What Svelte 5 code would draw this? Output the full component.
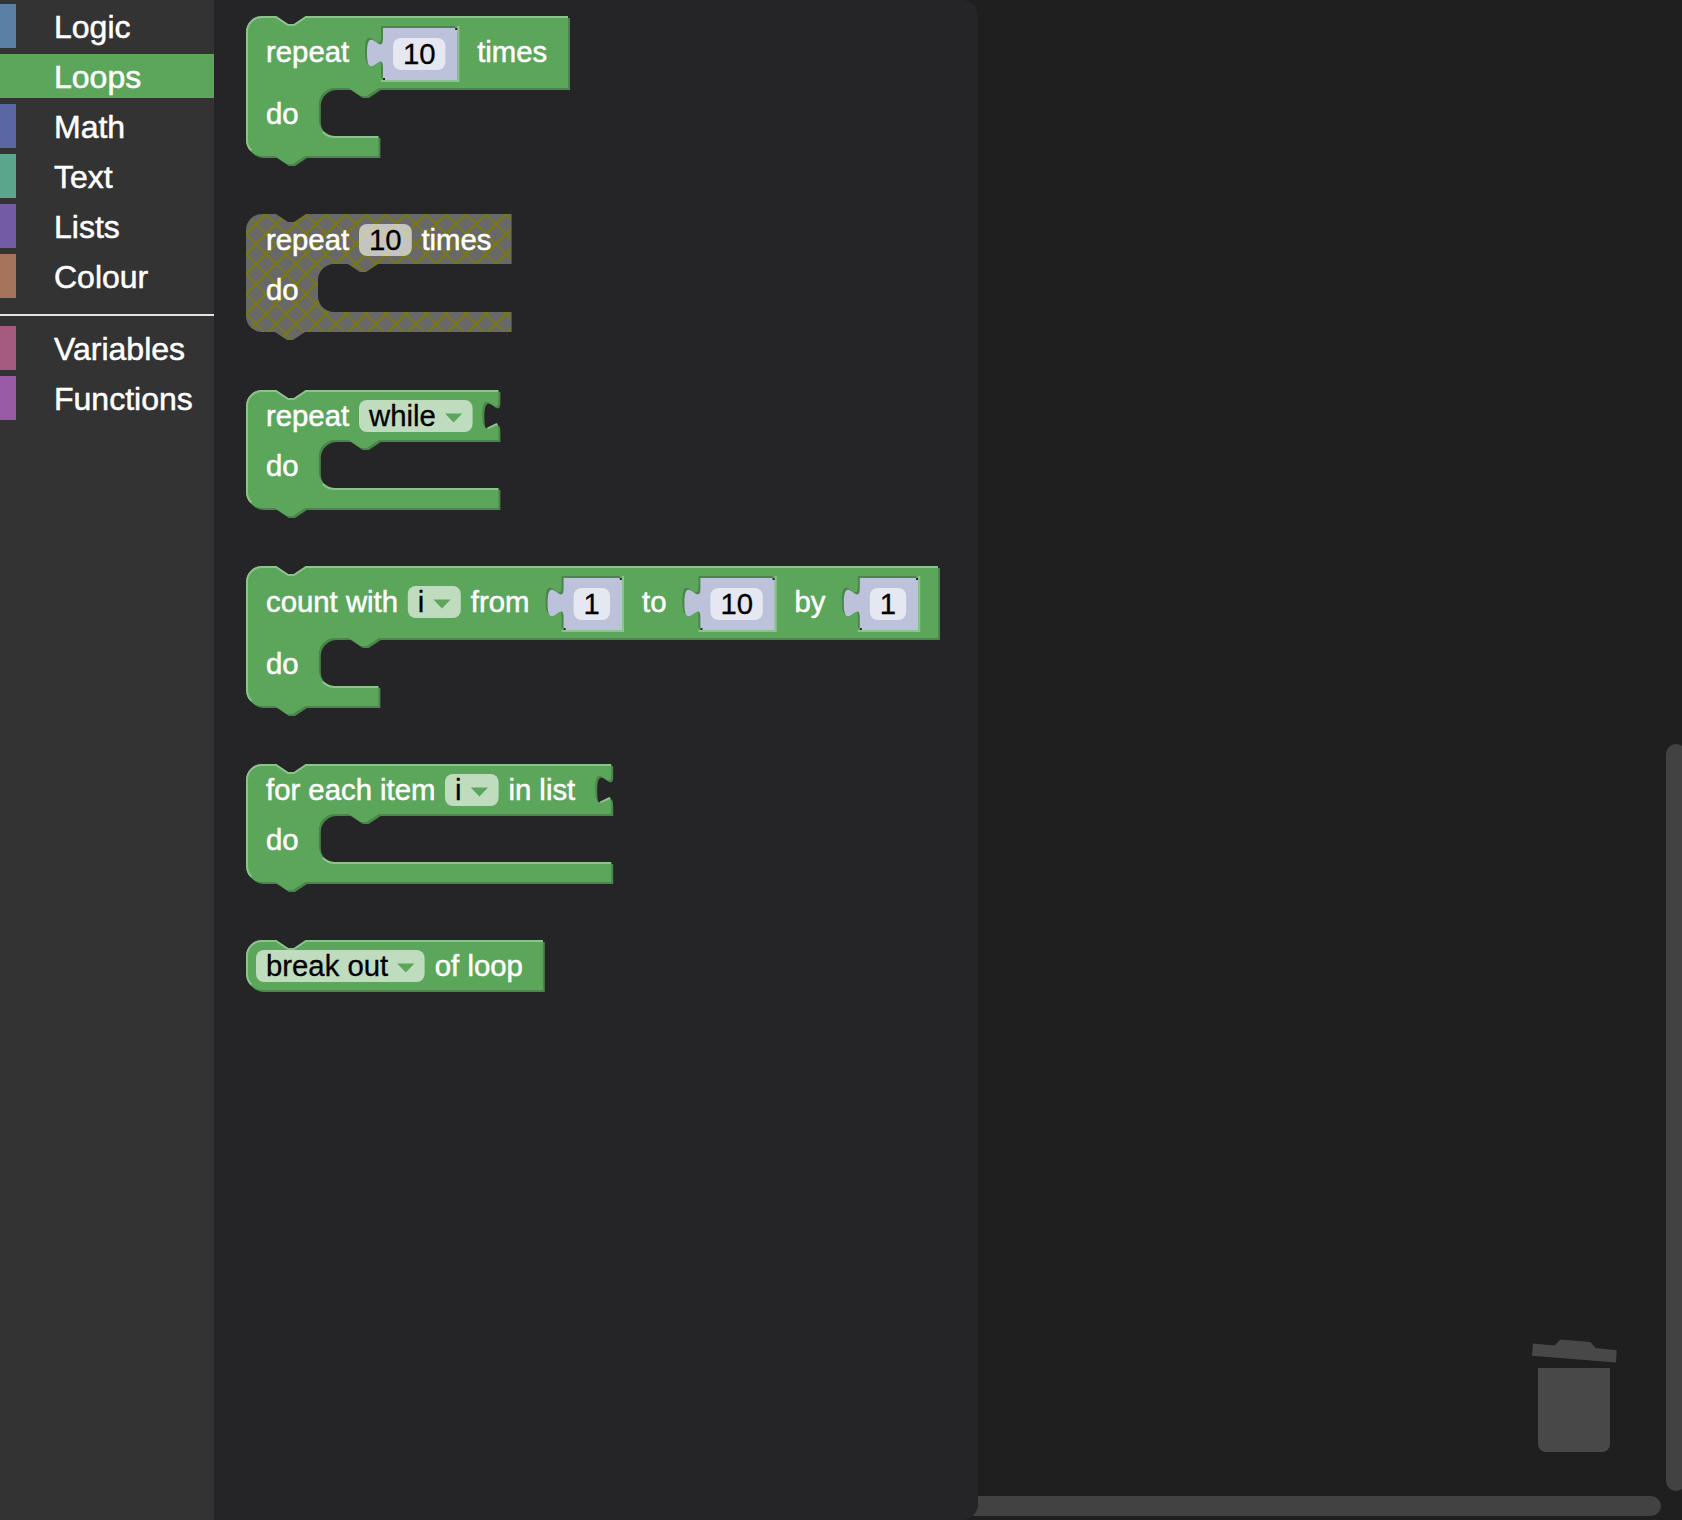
<script>
  const groups = [
    [
      { name: 'Logic', tone: 'logic' },
      { name: 'Loops', tone: 'loops', selected: true },
      { name: 'Math', tone: 'math' },
      { name: 'Text', tone: 'text' },
      { name: 'Lists', tone: 'lists' },
      { name: 'Colour', tone: 'colour' },
    ],
    [
      { name: 'Variables', tone: 'variables' },
      { name: 'Functions', tone: 'functions' },
    ],
  ];

  // Block geometry is in workspace units; each unit is drawn at two pixels.
  // w: width, row: height of the first row, foot: width of the statement foot
  const blocks = [
    {
      w: 161, row: 36, foot: 66.2, statement: true,
      labels: [{ x: 10, t: 'repeat' }, { x: 115.6, t: 'times' }],
      values: [{ x: 68.5, w: 37.2, t: '10' }],
    },
    {
      w: 132.8, row: 25, foot: 132.8, statement: true, disabled: true,
      labels: [{ x: 10, t: 'repeat' }, { x: 87.7, t: 'times' }],
      fields: [{ x: 56.5, w: 26.4, t: '10' }],
    },
    {
      w: 126.2, row: 25, foot: 126.2, statement: true, socket: true,
      labels: [{ x: 10, t: 'repeat' }],
      fields: [{ x: 56.5, w: 56.8, t: 'while', arrow: 99.5 }],
    },
    {
      w: 346, row: 36, foot: 66.2, statement: true,
      labels: [{ x: 10, t: 'count with' }, { x: 112.4, t: 'from' }, { x: 198, t: 'to' }, { x: 274.2, t: 'by' }],
      fields: [{ x: 80.9, w: 26.5, t: 'i', arrow: 93.7 }],
      values: [{ x: 158.8, w: 29.2, t: '1' }, { x: 227.2, w: 37.2, t: '10' }, { x: 306.9, w: 29.2, t: '1' }],
    },
    {
      w: 182.6, row: 25, foot: 182.6, statement: true, socket: true,
      labels: [{ x: 10, t: 'for each item' }, { x: 131.2, t: 'in list' }],
      fields: [{ x: 99.5, w: 26.8, t: 'i', arrow: 112.4 }],
    },
    {
      w: 148.4, row: 25,
      labels: [{ x: 94.4, t: 'of loop' }],
      fields: [{ x: 5, w: 84.3, t: 'break out', arrow: 75.6 }],
    },
  ];

  const total = (b) => (b.statement ? b.row + 34 : b.row);
  const inset = (b) => (b.disabled ? 0 : 0.4);

  function outline(b) {
    const h = total(b);
    let d = `M0,8 A8,8 0 0,1 8,0 H15 l6,4 3,0 6,-4 H${b.w}`;
    if (b.socket) d += ' V5 c0,10 -8,-8 -8,7.5 s8,-2.5 8,7.5';
    d += ` V${b.row}`;
    if (b.statement) {
      d += ` H${66 + inset(b)} l-6,4 -3,0 -6,-4 h-7 a8,8 0 0,0 -8,8 v8 a8,8 0 0,0 8,8 H${b.foot} V${h}`;
      d += ' H29.5 l-6,4 -3,0 -6,-4';
    }
    return d + ' H8 a8,8 0 0,1 -8,-8 z';
  }

  function highlight(b) {
    const h = total(b);
    let d = `M2.7,${h - 2.7} A7.5,7.5 0 0,1 0.5,${h - 8} V8 A7.5,7.5 0 0,1 8,0.5 H15 l6,4 3,0 6,-4 H${b.w}`;
    if (b.socket) d += ` M${b.w - 5.4},19.2 l4.9,-2.3`;
    if (b.statement) d += ` M38.4,${b.row + 22} A8.5,8.5 0 0,0 44.4,${b.row + 24.5} H${b.foot}`;
    return d;
  }

  const plug = (w) => `M0,0 H${w} V26 H0 V20 c0,-10 -8,8 -8,-7.5 s8,2.5 8,-7.5 z`;
</script>

<div class="workspace">
  <nav class="toolbox">
    {#each groups as group, g}
      {#if g > 0}<div class="separator"></div>{/if}
      {#each group as c}
        <div class="category {c.tone}" class:selected={c.selected}>{c.name}</div>
      {/each}
    {/each}
  </nav>

  <section class="flyout">
    {#each blocks as b}
      {@const base = b.row === 36 ? 23.1 : 18.1}
      {@const top = b.row === 36 ? 10 : 5}
      <svg class="block" width={(b.w + 2) * 2} height={(total(b) + 5) * 2} viewBox="0 0 {b.w + 2} {total(b) + 5}">
        {#if b.disabled}
          <defs>
            <pattern id="hatch" width="10" height="10" patternUnits="userSpaceOnUse">
              <rect width="10" height="10" fill="#aaa" />
              <path d="M0,0 L10,10 M10,0 L0,10" stroke="#cc0" />
            </pattern>
          </defs>
          <path d={outline(b)} fill="url(#hatch)" fill-opacity="0.5" />
        {:else}
          <path class="dark" d={outline(b)} transform="translate(1,1)" />
          <path class="body" d={outline(b)} />
          <path class="light" d={highlight(b)} />
        {/if}
        {#each b.fields ?? [] as f}
          <rect class="field" x={f.x} y={top} width={f.w} height="16" rx="4" />
          <text class="value" x={f.x + 5} y={base}>{f.t}</text>
          {#if f.arrow}
            <path class="body" d="M{f.arrow},{top + 6.8} h8.6 l-4.3,4.5 z" />
          {/if}
        {/each}
        {#each b.values ?? [] as v}
          <g transform="translate({v.x},6)">
            <path class="dark" d={plug(v.w)} transform="translate(-1,-1)" />
            <path class="shadow" d={plug(v.w)} />
            <path class="light" d="M-1,26.5 H{v.w + 0.5} V-1" />
            <rect class="pit" x={v.w - 1.1} y="0" width="1" height="1" />
            <rect class="pit" x="0" y="25" width="1" height="1" />
            <rect class="field" x="5" y="5" width={v.w - 11} height="16" rx="4" />
            <text class="value" x="10" y="18.1">{v.t}</text>
          </g>
        {/each}
        {#each b.labels as l}
          <text x={l.x} y={base}>{l.t}</text>
        {/each}
        {#if b.statement}
          <text x="10" y={b.row + 18.1}>do</text>
        {/if}
      </svg>
    {/each}
  </section>

  <svg class="trash" width="90" height="116" viewBox="0 0 90 116">
    <path d="M3,5.5 L24.5,7.5 30.5,1.5 60.5,4 65.5,10 86.7,12.3 86,24.5 2,17.8 z" />
    <path d="M8,30 H80 V106 a8,8 0 0,1 -8,8 H16 a8,8 0 0,1 -8,-8 z" />
  </svg>
  <div class="bar horizontal"></div>
  <div class="bar vertical"></div>
</div>

<style>
  :global(body) {
    background: #1f1f1f;
    overflow: hidden;
  }
  .workspace {
    position: relative;
    display: flex;
    width: 1682px;
    height: 1520px;
    overflow: hidden;
    background: #1f1f1f;
    font-family: 'Liberation Sans', Arial, sans-serif;
  }
  .toolbox {
    box-sizing: border-box;
    display: flex;
    flex-direction: column;
    gap: 6px;
    width: 214px;
    padding-top: 4px;
    background: #333;
    color: #fff;
    font-size: 32px;
    -webkit-text-stroke: 0.5px #fff;
  }
  .category {
    box-sizing: border-box;
    height: 44px;
    padding-left: 38px;
    border-left: 16px solid var(--tone);
    line-height: 47px;
    white-space: nowrap;
  }
  .selected { background: var(--tone); }
  .logic { --tone: #5b80a5; }
  .loops { --tone: #5ca65c; }
  .math { --tone: #5b67a5; }
  .text { --tone: #5ba58c; }
  .lists { --tone: #745ba5; }
  .colour { --tone: #a5745b; }
  .variables { --tone: #a55b80; }
  .functions { --tone: #995ba5; }
  .separator {
    height: 2px;
    margin: 10px 0 4px;
    background: #e4e2e4;
  }
  .flyout {
    z-index: 1;
    box-sizing: border-box;
    display: flex;
    flex-direction: column;
    align-items: flex-start;
    gap: 48px;
    width: 764px;
    padding: 16px 32px;
    border-radius: 0 16px 16px 0;
    background: #252527;
  }
  .block {
    display: block;
    flex: none;
    font-size: 14.667px;
  }
  .block text {
    fill: #fff;
    stroke: #fff;
    stroke-width: 0.25;
  }
  .block .value {
    fill: #000;
    stroke: #000;
    stroke-width: 0.15;
  }
  .body { fill: #5ca65c; }
  .dark { fill: #4a854a; }
  .light {
    fill: none;
    stroke: #8dc18d;
    stroke-width: 1;
  }
  .shadow { fill: #bdc2db; }
  .field {
    fill: #fff;
    fill-opacity: 0.61;
  }
  .pit { fill: #252527; }
  .trash {
    position: absolute;
    left: 1530px;
    top: 1338px;
    fill: #484848;
  }
  .bar {
    position: absolute;
    border-radius: 10px;
    background: #424242;
  }
  .horizontal {
    left: 900px;
    top: 1496px;
    width: 761px;
    height: 20px;
  }
  .vertical {
    left: 1666px;
    top: 744px;
    width: 20px;
    height: 747px;
  }
</style>
